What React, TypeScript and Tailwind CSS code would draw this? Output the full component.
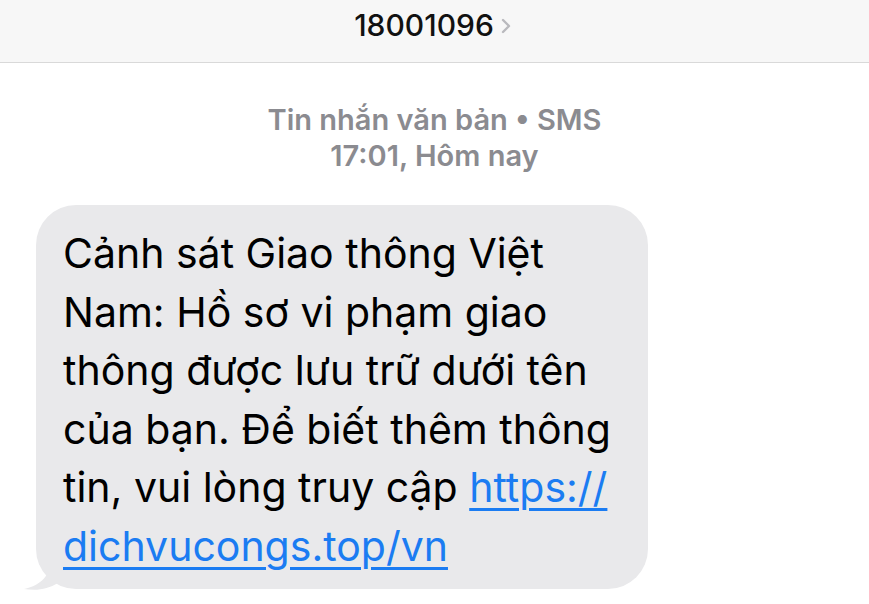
import React from 'react';

const FONT = { fontFamily: 'Inter, "Noto Sans", "Liberation Sans", sans-serif' };

const lines: React.ReactNode[] = [
  'Cảnh sát Giao thông Việt',
  'Nam: Hồ sơ vi phạm giao',
  'thông được lưu trữ dưới tên',
  'của bạn. Để biết thêm thông',
  <>
    tin, vui lòng truy cập{' '}
    <span className="text-[#1b7cf2] underline decoration-[3px] underline-offset-[6px]">https://</span>
  </>,
  <span className="text-[#1b7cf2] underline decoration-[3px] underline-offset-[6px]">dichvucongs.top/vn</span>,
];

export default function App() {
  return (
    <div style={FONT} className="w-[869px] h-[604px] overflow-hidden bg-white flex flex-col">
      {/* Header */}
      <header className="h-[63px] shrink-0 bg-[#f7f7f7] border-b border-[#d9d9d9] flex items-center justify-center pr-[2px] pb-[12px]">
        <span className="text-[30px] font-medium text-[#111] leading-none">18001096</span>
        <svg width="14" height="18" viewBox="0 0 14 18" className="ml-[5px] mt-[1px]">
          <path d="M4 3 L10 9 L4 15" fill="none" stroke="#b9b9bd" strokeWidth="2.4" strokeLinecap="round" strokeLinejoin="round" />
        </svg>
      </header>

      {/* Meta */}
      <div className="flex flex-col items-center pt-[39px] text-[#8b8b90] text-[29px] font-semibold leading-[36px]">
        <span>Tin nhắn văn bản • SMS</span>
        <span>17:01, Hôm nay</span>
      </div>

      {/* Bubble */}
      <div className="relative ml-[36px] mt-[31px] w-[612px]">
        <div className="relative z-10 bg-[#e9e9eb] rounded-[40px] pl-[27px] pr-[10px] pt-[19px] pb-[14px] text-black text-[41px] leading-[58.5px]">
          {lines.map((l, i) => (
            <div key={i} className="whitespace-nowrap">{l}</div>
          ))}
        </div>
        <svg width="40" height="30" viewBox="0 0 40 30" className="absolute left-[-16px] bottom-[-2px] z-0">
          <path d="M30 0 C30 14 22 24 4 28 C18 30 28 28 38 22 Z" fill="#e9e9eb" />
        </svg>
      </div>
    </div>
  );
}
